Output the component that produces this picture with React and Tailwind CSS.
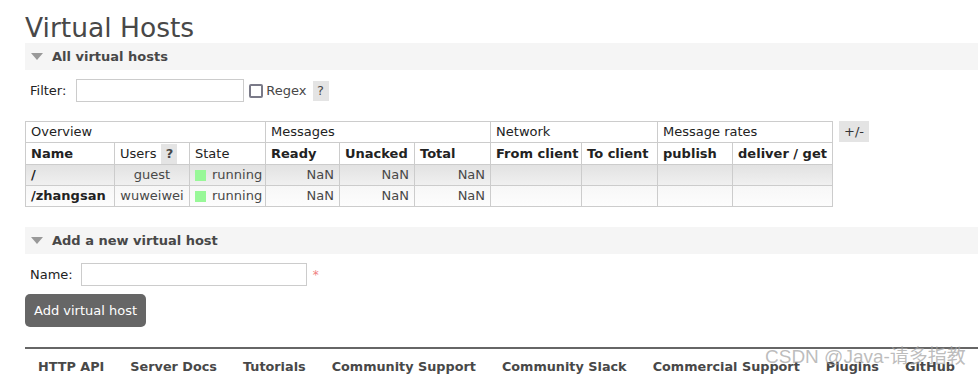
import React from 'react';

const font = { fontFamily: '"DejaVu Sans", Verdana, sans-serif' };

function SectionHeader({ title }) {
  return (
    <div className="flex items-center h-[27px] bg-[#f5f5f5] pl-[6px]">
      <span className="w-0 h-0 border-l-[6px] border-r-[6px] border-t-[7px] border-l-transparent border-r-transparent border-t-[#999]" />
      <h2 className="ml-[9px] text-[13px] font-bold text-[#484848]">{title}</h2>
    </div>
  );
}

const hosts = [
  { name: '/', user: 'guest', rowClass: 'bg-gradient-to-b from-[#e2e2e2] to-[#f1f1f1]' },
  { name: '/zhangsan', user: 'wuweiwei', rowClass: 'bg-gradient-to-b from-[#f7f7f7] to-[#fdfdfd]' },
];

const cell = 'border border-[#cccccc] px-[5px] h-[21px] whitespace-nowrap overflow-hidden';

export default function App() {
  return (
    <div className="relative w-[978px] h-[375px] overflow-hidden bg-white text-[13px] text-[#222]" style={font}>
      <div className="pl-[25px]">
        <h1 className="text-[26.5px] leading-[30px] pt-[13px] text-[#484848]">Virtual Hosts</h1>

        <div>
          <SectionHeader title="All virtual hosts" />
        </div>

        {/* Filter */}
        <div className="flex items-center mt-[9px] pl-[5px] h-[23px]">
          <span>Filter:</span>
          <input className="ml-[10px] w-[168px] h-[23px] border border-[#cccccc] bg-white" />
          <span className="ml-[5px] w-[14px] h-[14px] border-2 border-[#7a7a88] rounded-[2px]" />
          <span className="ml-[3px] text-[#484848]">Regex</span>
          <span className="ml-[6px] w-[16px] h-[20px] bg-[#e4e4e4] text-[#484848] flex items-center justify-center">?</span>
        </div>

        {/* Table */}
        <div className="flex items-start mt-[19px]">
          <table className="table-fixed w-[808px] border-collapse text-[13px] text-[#222]">
            <colgroup>
              <col className="w-[89px]" />
              <col className="w-[75px]" />
              <col className="w-[76px]" />
              <col className="w-[74px]" />
              <col className="w-[75px]" />
              <col className="w-[76px]" />
              <col className="w-[91px]" />
              <col className="w-[76px]" />
              <col className="w-[75px]" />
              <col className="w-[100px]" />
            </colgroup>
            <thead>
              <tr>
                <th colSpan={3} className={`${cell} text-left font-normal`}>Overview</th>
                <th colSpan={3} className={`${cell} text-left font-normal`}>Messages</th>
                <th colSpan={2} className={`${cell} text-left font-normal`}>Network</th>
                <th colSpan={2} className={`${cell} text-left font-normal`}>Message rates</th>
              </tr>
              <tr className="h-[22px]">
                <th className={`${cell} text-left`}>Name</th>
                <th className={`${cell} text-left font-normal`}>
                  <span className="flex items-center">
                    Users
                    <span className="ml-[5px] w-[16px] h-[20px] shrink-0 bg-[#e4e4e4] text-[#484848] font-bold flex items-center justify-center">?</span>
                  </span>
                </th>
                <th className={`${cell} text-left font-normal`}>State</th>
                <th className={`${cell} text-left`}>Ready</th>
                <th className={`${cell} text-left`}>Unacked</th>
                <th className={`${cell} text-left`}>Total</th>
                <th className={`${cell} text-left`}>From client</th>
                <th className={`${cell} text-left`}>To client</th>
                <th className={`${cell} text-left`}>publish</th>
                <th className={`${cell} text-left`}>deliver / get</th>
              </tr>
            </thead>
            <tbody>
              {hosts.map((h) => (
                <tr key={h.name} className={h.rowClass}>
                  <td className={`${cell} font-bold`}>{h.name}</td>
                  <td className={`${cell} text-center text-[#484848]`}>{h.user}</td>
                  <td className={`${cell} text-[#484848]`}>
                    <span className="flex items-center">
                      <span className="w-[11px] h-[11px] shrink-0 bg-[#98f898] mr-[6px]" />
                      running
                    </span>
                  </td>
                  <td className={`${cell} text-right text-[#484848]`}>NaN</td>
                  <td className={`${cell} text-right text-[#484848]`}>NaN</td>
                  <td className={`${cell} text-right text-[#484848]`}>NaN</td>
                  <td className={cell}></td>
                  <td className={cell}></td>
                  <td className={cell}></td>
                  <td className={cell}></td>
                </tr>
              ))}
            </tbody>
          </table>
          <span className="ml-[6px] w-[30px] h-[21px] bg-[#e4e4e4] flex items-center justify-center text-[#333]">+/-</span>
        </div>

        <div className="mt-[20px]">
          <SectionHeader title="Add a new virtual host" />
        </div>

        {/* Add form */}
        <div className="flex items-center mt-[9px] pl-[5px] h-[23px]">
          <span>Name:</span>
          <input className="ml-[8px] w-[226px] h-[23px] border border-[#cccccc] bg-white" />
          <span className="ml-[6px] text-[#f08080] text-[12px]">*</span>
        </div>
        <button className="mt-[8px] h-[33px] px-[9px] bg-[#666] text-white rounded-[5px] text-[13px]" style={font}>
          Add virtual host
        </button>

        {/* Footer */}
        <div className="mt-[20px] border-t-[2px] border-[#666]">
          <div className="flex pt-[8px] font-bold text-[12.8px] text-[#484848]">
            {['HTTP API', 'Server Docs', 'Tutorials', 'Community Support', 'Community Slack', 'Commercial Support', 'Plugins', 'GitHub'].map((l) => (
              <span key={l} className="px-[13px] whitespace-nowrap">{l}</span>
            ))}
          </div>
        </div>
      </div>

      {/* watermark */}
      <div
        className="absolute left-[765px] top-[343px] text-[19px] text-[#a0a0a0]/70 whitespace-nowrap"
        style={{ fontFamily: '"Liberation Sans", "Noto Sans CJK SC", sans-serif' }}
      >
        CSDN @Java-请多指教
      </div>
    </div>
  );
}
